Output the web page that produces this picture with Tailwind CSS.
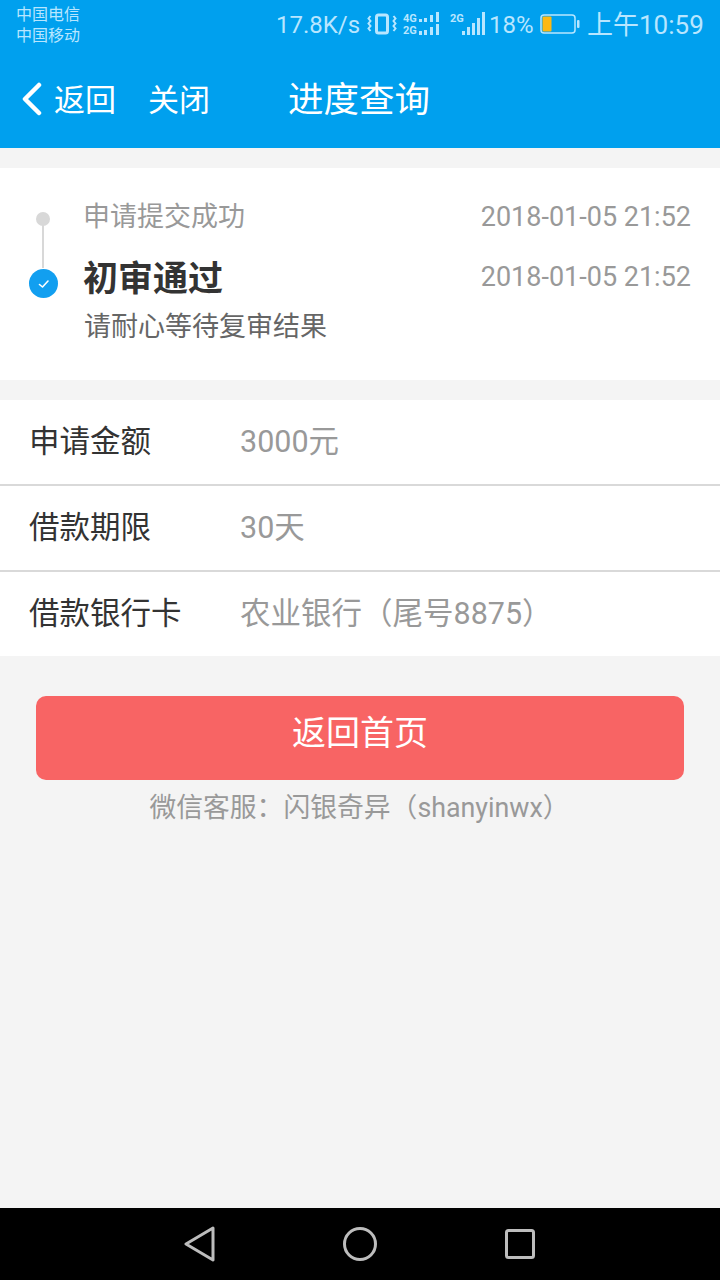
<!DOCTYPE html>
<html lang="zh-CN">
<head>
  <meta charset="UTF-8" />
  <meta name="viewport" content="width=device-width, initial-scale=1.0" />
  <title>进度查询</title>
  <script src="https://cdn.jsdelivr.net/npm/@tailwindcss/browser@4"></script>
</head>
<body class="font-['Roboto','Noto_Sans_CJK_SC',sans-serif]">
<div class="w-[720px] h-[1280px] flex flex-col bg-[#f4f4f4] overflow-hidden">

  <!-- status bar + header -->
  <div class="h-[148px] bg-[#00a0ee] text-white">
    <div class="h-[48px] flex items-center pl-4 text-[#b8e6ff]">
      <div class="text-[16px] leading-[21px] w-[260px] pt-px">
        <div>中国电信</div>
        <div>中国移动</div>
      </div>
      <span class="w-[83px] text-[24px] leading-none whitespace-nowrap pt-[2px]">17.8K/s</span>
      <svg class="ml-2" width="30" height="26" viewBox="0 0 30 26" fill="none" stroke="currentColor">
        <rect x="9.500" y="4" width="11" height="18" rx="2" stroke-width="3"/>
        <path d="M3.500 5 l-2 2.500 l2 2.500 l-2 2.500 l2 2.500 l-2 2.500 l2 2.500 M26.500 5 l2 2.500 l-2 2.500 l2 2.500 l-2 2.500 l2 2.500 l-2 2.500" stroke-width="2"/>
      </svg>
      <svg class="ml-[6px]" width="40" height="26" viewBox="0 0 40 26" fill="currentColor">
        <text x="0" y="11" font-size="11" font-weight="700">4G</text>
        <text x="0" y="23" font-size="11" font-weight="700">2G</text>
        <rect x="16" y="8" width="3" height="3"/><rect x="21" y="7" width="3" height="4"/><rect x="27" y="4" width="3" height="7"/><rect x="33" y="1" width="3" height="10"/>
        <rect x="16" y="20" width="3" height="4"/><rect x="21" y="19" width="3" height="5"/><rect x="27" y="16" width="3" height="8"/><rect x="33" y="13" width="3" height="11"/>
      </svg>
      <svg class="ml-[6px]" width="38" height="26" viewBox="0 0 38 26" fill="currentColor">
        <text x="1" y="11" font-size="11" font-weight="700">2G</text>
        <rect x="13" y="20" width="3" height="4"/><rect x="18" y="16" width="3" height="8"/><rect x="23" y="12" width="3" height="12"/><rect x="28" y="7" width="3" height="17"/><rect x="33" y="1" width="3" height="23"/>
      </svg>
      <span class="ml-[2px] w-[44px] text-[24px] leading-none pt-[2px]">18%</span>
      <svg class="ml-[7px]" width="40" height="22" viewBox="0 0 40 22" fill="none">
        <rect x="1" y="2" width="34" height="18" rx="3" stroke="currentColor" stroke-width="1.500"/>
        <rect x="2.500" y="3.500" width="9" height="15" rx="1" fill="#fdb813"/>
        <rect x="37" y="7" width="2.500" height="8" rx="1" fill="currentColor"/>
      </svg>
      <span class="ml-[7px] text-[26px] leading-none whitespace-nowrap pt-[2px]">上午10:59</span>
    </div>
    <div class="h-[100px] flex items-center pt-[4px]">
      <svg class="ml-[22px] -mt-[2px]" width="20" height="34" viewBox="0 0 20 34" fill="none" stroke="#ffffff" stroke-width="4.500" stroke-linecap="round" stroke-linejoin="round">
        <path d="M17 3 L3 17 L17 31"/>
      </svg>
      <span class="ml-[12px] w-[95px] text-[31px] leading-none">返回</span>
      <span class="w-[140px] -ml-px text-[31px] leading-none">关闭</span>
      <span class="text-[35.5px] leading-none pt-[2px]">进度查询</span>
    </div>
  </div>

  <!-- timeline -->
  <div class="mt-5 h-[212px] bg-white relative">
    <div class="absolute left-[36px] top-[44px] w-[14px] h-[14px] rounded-full bg-[#d8d8d8]"></div>
    <div class="absolute left-[42px] top-[56px] w-[2px] h-[44px] bg-[#d8d8d8]"></div>
    <div class="absolute left-[29px] top-[101px] w-[29px] h-[29px] rounded-full bg-[#129ff0] flex items-center justify-center">
      <svg width="14" height="14" viewBox="0 0 14 14" fill="none" stroke="#ffffff" stroke-width="1.600" stroke-linecap="round" stroke-linejoin="round">
        <path d="M2.500 7.500 L5.500 10 L11 4"/>
      </svg>
    </div>
    <div class="pl-[83px] pr-[29px] pt-[31px]">
      <div class="flex justify-between items-center h-[36px]">
        <span class="text-[27px] text-[#999999] leading-none">申请提交成功</span>
        <span class="text-[27px] text-[#999999] leading-none">2018-01-05 21:52</span>
      </div>
      <div class="flex justify-between items-center mt-[19px] h-[50px]">
        <span class="text-[35px] font-bold text-[#333333] leading-none">初审通过</span>
        <span class="text-[27px] text-[#999999] leading-none -mt-[4px]">2018-01-05 21:52</span>
      </div>
      <div class="text-[27px] text-[#666666] leading-none mt-[10px] pl-px">请耐心等待复审结果</div>
    </div>
  </div>

  <!-- info rows -->
  <div class="mt-5 bg-white">
    <div class="h-[86px] flex items-center pl-[29px] border-b-2 border-[#d9d9d9]">
      <span class="w-[211px] text-[30.5px] text-[#333333] leading-none">申请金额</span>
      <span class="text-[30.5px] text-[#999999] leading-none">3000元</span>
    </div>
    <div class="h-[86px] flex items-center pl-[29px] border-b-2 border-[#d9d9d9]">
      <span class="w-[211px] text-[30.5px] text-[#333333] leading-none">借款期限</span>
      <span class="text-[30.5px] text-[#999999] leading-none">30天</span>
    </div>
    <div class="h-[84px] flex items-center pl-[29px]">
      <span class="w-[211px] text-[30.5px] text-[#333333] leading-none">借款银行卡</span>
      <span class="text-[30.5px] text-[#999999] leading-none">农业银行（尾号8875）</span>
    </div>
  </div>

  <!-- action -->
  <div class="px-[36px] mt-10">
    <div class="h-[84px] rounded-[10px] bg-[#f86464] flex items-center justify-center pb-[10px] text-white text-[34px] leading-none">返回首页</div>
  </div>
  <div class="mt-[15px] text-center text-[26.8px] text-[#999999] leading-none pr-[1px]">微信客服：闪银奇异（shanyinwx）</div>

  <div class="flex-1"></div>

  <!-- nav bar -->
  <div class="h-[72px] bg-black flex items-center justify-center pr-[2px]">
    <svg class="mr-[127px]" width="32" height="36" viewBox="0 0 32 36" fill="none" stroke="#bdbdbd" stroke-width="3" stroke-linejoin="round"><path d="M29 2 L2 18 L29 34 Z"/></svg>
    <svg class="mr-[128px]" width="34" height="34" viewBox="0 0 34 34" fill="none" stroke="#bdbdbd" stroke-width="3"><circle cx="17" cy="17" r="15.500"/></svg>
    <svg width="30" height="30" viewBox="0 0 30 30" fill="none" stroke="#bdbdbd" stroke-width="3" stroke-linejoin="round"><rect x="1.500" y="1.500" width="27" height="27" rx="2"/></svg>
  </div>
</div>
</body>
</html>
